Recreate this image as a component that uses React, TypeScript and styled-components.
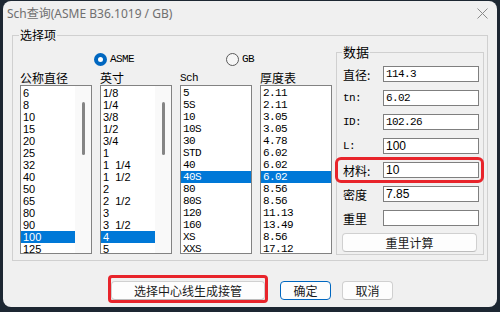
import styled, { createGlobalStyle } from 'styled-components';

const SANS = `"Liberation Sans", "Noto Sans CJK SC", sans-serif`;
const CJK = `"Noto Sans CJK SC", "Liberation Sans", sans-serif`;
const MONO = `"Liberation Mono", "Noto Sans CJK SC", monospace`;

type FontKind = 'sans' | 'mono' | 'cjk';

const fontCss = (k: FontKind) => {
  if (k === 'mono') return `font-family: ${MONO}; font-size: 11px; letter-spacing: -0.6px;`;
  if (k === 'cjk') return `font-family: ${CJK}; font-size: 12px; letter-spacing: 0;`;
  return `font-family: ${SANS}; font-size: 12px; letter-spacing: 0;`;
};

interface IListCol {
  title: string;
  titleFont: FontKind;
  font: FontKind;
  items: string[];
  selected: number;
  scroll?: boolean;
}

interface IField {
  label: string;
  labelFont: FontKind;
  value: string;
  font: FontKind;
  marked?: boolean;
}

const listCols: IListCol[] = [
  {
    title: '公称直径',
    titleFont: 'cjk',
    font: 'sans',
    items: ['6', '8', '10', '15', '20', '25', '32', '40', '50', '65', '80', '90', '100', '125'],
    selected: 12,
    scroll: true,
  },
  {
    title: '英寸',
    titleFont: 'cjk',
    font: 'sans',
    items: ['1/8', '1/4', '3/8', '1/2', '3/4', '1', '1  1/4', '1  1/2', '2', '2  1/2', '3', '3  1/2', '4', '5'],
    selected: 12,
    scroll: true,
  },
  {
    title: 'Sch',
    titleFont: 'mono',
    font: 'mono',
    items: ['5', '5S', '10', '10S', '30', 'STD', '40', '40S', '80', '80S', '120', '160', 'XS', 'XXS'],
    selected: 7,
  },
  {
    title: '厚度表',
    titleFont: 'cjk',
    font: 'mono',
    items: ['2.11', '2.11', '3.05', '3.05', '4.78', '6.02', '6.02', '6.02', '8.56', '8.56', '11.13', '13.49', '8.56', '17.12'],
    selected: 7,
  },
];

const fields: IField[] = [
  { label: '直径:', labelFont: 'cjk', value: '114.3', font: 'mono' },
  { label: 'tn:', labelFont: 'mono', value: '6.02', font: 'mono' },
  { label: 'ID:', labelFont: 'mono', value: '102.26', font: 'mono' },
  { label: 'L:', labelFont: 'mono', value: '100', font: 'sans' },
  { label: '材料:', labelFont: 'cjk', value: '10', font: 'sans', marked: true },
  { label: '密度', labelFont: 'cjk', value: '7.85', font: 'sans' },
  { label: '重里', labelFont: 'cjk', value: '', font: 'sans' },
];

const App = () => {
  return (
    <Screen>
      <GlobalStyle />
      <Dialog>
        <TitleBar>
          <span>Sch查询(ASME B36.1019 / GB)</span>
          <svg width="11" height="11" viewBox="0 0 11 11">
            <path d="M0.5 0.5 L10.5 10.5 M10.5 0.5 L0.5 10.5" stroke="#8a8a8a" strokeWidth="1" />
          </svg>
        </TitleBar>

        <GroupBox $w={476} $h={233} $top={3} $left={9}>
          <GroupTitle $size={12} $indent={6}>选择项</GroupTitle>
          <MainBody>
            <LeftPane>
              <RadioRow>
                <RadioLabel $width={132}>
                  <RadioDot $on />
                  <span>ASME</span>
                </RadioLabel>
                <RadioLabel>
                  <RadioDot />
                  <span>GB</span>
                </RadioLabel>
              </RadioRow>

              <Columns>
                {listCols.map(col => (
                  <Column key={col.title}>
                    <ColTitle $font={col.titleFont}>{col.title}</ColTitle>
                    <ListBox>
                      <ListItems>
                        {col.items.map((item, i) => (
                          <ListItem key={i} $font={col.font} $active={i === col.selected}>
                            {item}
                          </ListItem>
                        ))}
                      </ListItems>
                      {col.scroll && (
                        <ScrollTrack>
                          <ScrollThumb />
                        </ScrollTrack>
                      )}
                    </ListBox>
                  </Column>
                ))}
              </Columns>
            </LeftPane>

            <GroupBox $w={148} $h={210} $top={3} $left={0}>
              <GroupTitle $size={13} $indent={5}>数据</GroupTitle>
              <DataBody>
                {fields.map(f => (
                  <FieldRow key={f.label} $marked={f.marked}>
                    <FieldLabel $font={f.labelFont}>{f.label}</FieldLabel>
                    <FieldInput $font={f.font} value={f.value} readOnly />
                  </FieldRow>
                ))}
                <CalcButton>重里计算</CalcButton>
              </DataBody>
            </GroupBox>
          </MainBody>
        </GroupBox>

        <ButtonRow>
          <MarkFrame>
            <DialogButton $width={154}>选择中心线生成接管</DialogButton>
          </MarkFrame>
          <DialogButton $width={51} $primary $offset={6}>
            确定
          </DialogButton>
          <DialogButton $width={51} $offset={6}>
            取消
          </DialogButton>
        </ButtonRow>
      </Dialog>
    </Screen>
  );
};

export default App;

const GlobalStyle = createGlobalStyle`
  html, body {
    margin: 0;
    padding: 0;
    background: #1d2732;
  }

  body {
    width: 500px;
    height: 312px;
    overflow: hidden;
  }

  * {
    box-sizing: border-box;
  }
`;

const Screen = styled.div`
  width: 500px;
  height: 312px;
  padding: 1px 3px 0;
  background: #1d2732;
`;

const Dialog = styled.div`
  width: 494px;
  height: 306px;
  background: #f0f0f0;
  border-radius: 8px;
  display: flex;
  flex-direction: column;
  color: #000;
`;

const TitleBar = styled.div`
  height: 24px;
  display: flex;
  align-items: center;
  justify-content: space-between;
  padding: 0 9px 0 4px;
  font-family: 'Noto Sans', 'Noto Sans CJK SC', sans-serif;
  font-size: 12px;
  color: #6f6f6f;
  flex-shrink: 0;
`;

const GroupBox = styled.fieldset<{ $w: number; $h: number; $top: number; $left: number }>`
  margin: ${p => p.$top}px 0 0 ${p => p.$left}px;
  padding: 0;
  min-width: 0;
  width: ${p => p.$w}px;
  height: ${p => p.$h}px;
  border: 1px solid #d0d0d0;
  flex-shrink: 0;
`;

const GroupTitle = styled.legend<{ $size: number; $indent: number }>`
  margin-left: ${p => p.$indent}px;
  padding: 0 1px;
  font-family: ${CJK};
  font-size: ${p => p.$size}px;
  line-height: 14px;
  color: #000;
`;

const MainBody = styled.div`
  display: flex;
  align-items: flex-start;
  gap: 4px;
  padding-left: 7px;
`;

const LeftPane = styled.div`
  width: 312px;
  display: flex;
  flex-direction: column;
`;

const RadioRow = styled.div`
  display: flex;
  align-items: center;
  height: 14px;
  margin-top: 10px;
  padding-left: 74px;
`;

const RadioLabel = styled.label<{ $width?: number }>`
  display: inline-flex;
  align-items: center;
  gap: 3px;
  width: ${p => (p.$width ? `${p.$width}px` : 'auto')};
  ${fontCss('mono')}
`;

const RadioDot = styled.span<{ $on?: boolean }>`
  width: 13px;
  height: 13px;
  border-radius: 50%;
  flex-shrink: 0;
  background: ${p => (p.$on ? '#fff' : '#f6f6f6')};
  border: ${p => (p.$on ? '4px solid #0067c0' : '1px solid #5a5a5a')};
`;

const Columns = styled.div`
  display: grid;
  grid-template-columns: repeat(4, 72px);
  column-gap: 8px;
  margin-top: 5px;
`;

const Column = styled.div`
  display: flex;
  flex-direction: column;
`;

const ColTitle = styled.div<{ $font: FontKind }>`
  height: 14px;
  line-height: 14px;
  white-space: nowrap;
  ${p => fontCss(p.$font)}
`;

const ListBox = styled.div`
  height: 169px;
  display: flex;
  background: #fff;
  border: 1px solid #828282;
  overflow: hidden;
`;

const ListItems = styled.div`
  flex: 1;
  padding-top: 1px;
  min-width: 0;
`;

const ListItem = styled.div<{ $font: FontKind; $active?: boolean }>`
  height: 12px;
  line-height: 12px;
  padding-left: 2px;
  white-space: pre;
  ${p => fontCss(p.$font)}
  font-size: ${p => (p.$font === 'sans' ? '11px' : '11px')};
  background: ${p => (p.$active ? '#0078d7' : 'transparent')};
  color: ${p => (p.$active ? '#fff' : '#000')};
`;

const ScrollTrack = styled.div`
  width: 16px;
  display: flex;
  justify-content: center;
  background: #f9f9f9;
`;

const ScrollThumb = styled.div`
  width: 3px;
  height: 53px;
  margin-top: 16px;
  border-radius: 2px;
  background: #858585;
`;

const DataBody = styled.div`
  padding-top: 3px;
  display: flex;
  flex-direction: column;
`;

const FieldRow = styled.div<{ $marked?: boolean }>`
  display: flex;
  align-items: center;
  height: 24px;
  margin-left: -1px;
  width: 147px;
  padding-left: 7px;
  border-radius: 5px;
  outline: ${p => (p.$marked ? '3px solid #e8242b' : 'none')};
  outline-offset: -2px;
`;

const FieldLabel = styled.span<{ $font: FontKind }>`
  width: 40px;
  white-space: nowrap;
  ${p => fontCss(p.$font)}
`;

const FieldInput = styled.input<{ $font: FontKind }>`
  width: 96px;
  height: 16px;
  margin: 0;
  padding: 0 0 0 2px;
  border: 1px solid #7f7f7f;
  background: #fff;
  color: #000;
  outline: none;
  ${p => fontCss(p.$font)}
`;

const CalcButton = styled.button`
  width: 135px;
  height: 19px;
  margin: 3px 0 0 5px;
  padding: 0;
  background: #fdfdfd;
  border: 1px solid #d0d0d0;
  border-bottom-color: #bcbcbc;
  border-radius: 4px;
  font-family: ${CJK};
  font-size: 12px;
  line-height: 17px;
  color: #1b1b1b;
`;

const ButtonRow = styled.div`
  display: flex;
  align-items: flex-start;
  justify-content: center;
  gap: 0 11px;
  margin-top: 14px;
  padding-left: 1px;
`;

const MarkFrame = styled.span`
  display: inline-flex;
  padding-top: 3px;
  border: 3px solid #e8242b;
  border-radius: 4px;
  margin-right: 1px;
`;

const DialogButton = styled.button<{ $width: number; $primary?: boolean; $offset?: number }>`
  width: ${p => p.$width}px;
  height: 19px;
  margin: ${p => p.$offset || 0}px 0 0;
  padding: 0;
  background: #fdfdfd;
  border: 1px solid ${p => (p.$primary ? '#0067c0' : '#d0d0d0')};
  border-bottom-color: ${p => (p.$primary ? '#0067c0' : '#bcbcbc')};
  border-radius: 4px;
  font-family: ${CJK};
  font-size: 12px;
  line-height: 17px;
  color: #1b1b1b;
`;
